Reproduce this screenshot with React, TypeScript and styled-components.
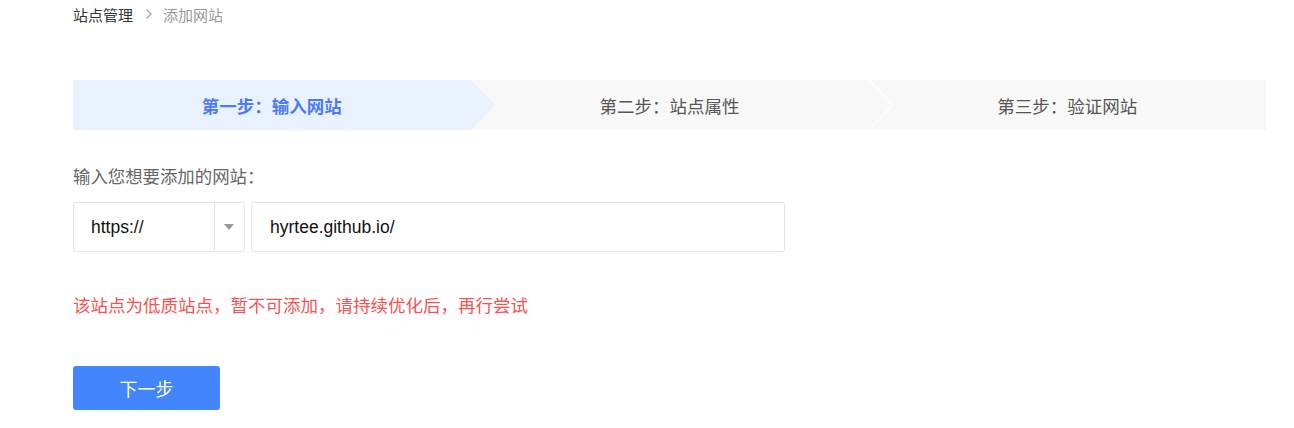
import React from "react";
import styled, { createGlobalStyle } from "styled-components";

const GlobalStyle = createGlobalStyle`
  html, body { margin: 0; padding: 0; background: #fff; }
  body { font-family: "Liberation Sans", "Noto Sans CJK SC", Arial, sans-serif; }
  * { box-sizing: border-box; }
`;

const cjk = `"Noto Sans CJK SC", "Liberation Sans", sans-serif`;

const Page = styled.div`
  width: 1294px;
  padding: 0 28px 0 73px;
`;

const Breadcrumb = styled.nav`
  display: flex;
  align-items: center;
  height: 28px;
  font-family: ${cjk};
  font-size: 15px;
`;

const Crumb = styled.span<{ $current?: boolean }>`
  color: ${(p) => (p.$current ? "#999" : "#333")};
`;

const Sep = styled.span`
  display: inline-flex;
  margin: 0 10px 0 12px;
  color: #a8a8a8;
`;

const Steps = styled.div`
  display: flex;
  height: 50px;
  margin-top: 52px;
  width: 1193px;
`;

const Step = styled.div<{ $active?: boolean; $chevron?: boolean }>`
  position: relative;
  flex: 1;
  display: flex;
  align-items: center;
  justify-content: center;
  background: ${(p) => (p.$active ? "#eaf1fe" : "#f8f8f8")};
  color: ${(p) => (p.$active ? "#4a7bf7" : "#555")};
  font-weight: ${(p) => (p.$active ? 700 : 400)};
  font-family: ${cjk};
  font-size: 17.5px;

  &::after {
    content: "";
    display: ${(p) => (p.$active || p.$chevron ? "block" : "none")};
    position: absolute;
    top: 0;
    left: 100%;
    width: 25px;
    height: 50px;
    z-index: 2;
    background: ${(p) => (p.$active ? "#eaf1fe" : "#ffffff")};
    clip-path: ${(p) =>
      p.$active
        ? "polygon(0 0, 100% 50%, 0 100%)"
        : "polygon(0 0, 1.5px 0, 25px 25px, 1.5px 50px, 0 50px, 23.5px 25px)"};
  }
`;

const Label = styled.div`
  margin-top: 36px;
  line-height: 20px;
  font-family: ${cjk};
  font-size: 17.4px;
  color: #666;
`;

const InputRow = styled.div`
  display: flex;
  gap: 6px;
  margin-top: 16px;
  height: 50px;
`;

const Select = styled.div`
  display: flex;
  width: 172px;
  border: 1px solid #e5e5e5;
  border-radius: 3px;
  background: #fff;
`;

const SelectValue = styled.div`
  flex: 1;
  display: flex;
  align-items: center;
  padding-left: 17px;
  font-size: 17.5px;
  color: #111;
  border-right: 1px solid #e5e5e5;
`;

const Caret = styled.div`
  width: 29px;
  display: flex;
  align-items: center;
  justify-content: center;

  &::before {
    content: "";
    width: 0;
    height: 0;
    border-left: 5px solid transparent;
    border-right: 5px solid transparent;
    border-top: 6px solid #999;
    margin-right: 2px;
  }
`;

const TextInput = styled.input`
  width: 534px;
  height: 50px;
  border: 1px solid #e5e5e5;
  border-radius: 3px;
  padding: 0 18px;
  font-family: "Liberation Sans", Arial, sans-serif;
  font-size: 17.5px;
  color: #111;
  outline: none;
`;

const ErrorText = styled.div`
  margin-top: 42px;
  line-height: 22px;
  font-family: ${cjk};
  font-size: 17.5px;
  color: #f55252;
`;

const Button = styled.button`
  margin-top: 50px;
  width: 147px;
  height: 44px;
  border: none;
  border-radius: 3px;
  background: #4285fc;
  color: #fff;
  font-family: ${cjk};
  font-size: 18px;
  cursor: pointer;
`;

export default function App() {
  return (
    <>
      <GlobalStyle />
      <Page>
        <Breadcrumb>
          <Crumb>站点管理</Crumb>
          <Sep>
            <svg width="8" height="12" viewBox="0 0 8 12" fill="none">
              <path d="M1.5 1.5 L6 6 L1.5 10.5" stroke="#a8a8a8" strokeWidth="1.4" />
            </svg>
          </Sep>
          <Crumb $current>添加网站</Crumb>
        </Breadcrumb>
        <Steps>
          <Step $active>第一步：输入网站</Step>
          <Step $chevron>第二步：站点属性</Step>
          <Step>第三步：验证网站</Step>
        </Steps>
        <Label>输入您想要添加的网站：</Label>
        <InputRow>
          <Select>
            <SelectValue>https://</SelectValue>
            <Caret />
          </Select>
          <TextInput defaultValue="hyrtee.github.io/" />
        </InputRow>
        <ErrorText>该站点为低质站点，暂不可添加，请持续优化后，再行尝试</ErrorText>
        <Button>下一步</Button>
      </Page>
    </>
  );
}
